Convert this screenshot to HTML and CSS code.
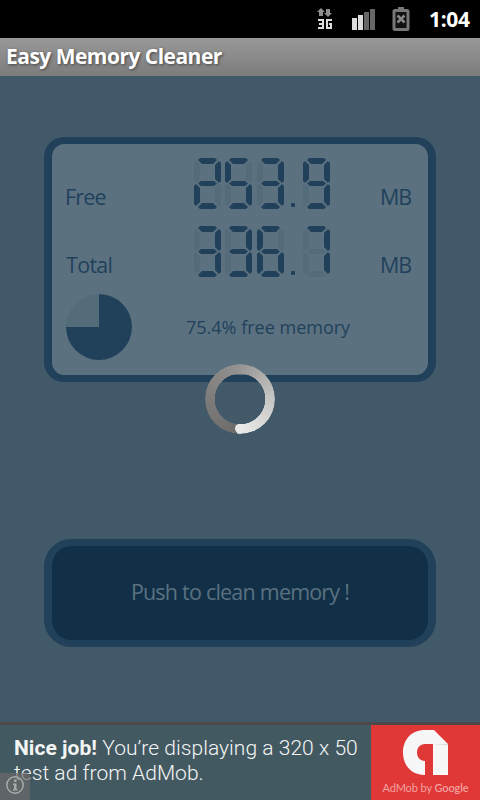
FILE: index.html
```html
<!DOCTYPE html>
<html lang="en">

<head>
    <meta charset="UTF-8">
    <meta name="viewport" content="width=device-width, initial-scale=1.0">
    <title>Easy Memory Cleaner</title>
    <link rel="stylesheet" href="styles.css">
</head>

<body>
    <div class="screen">
        <div class="status">
            <svg class="net" width="20" height="26" viewBox="0 0 20 26">
                <path fill="#8f8f8f" d="M6 2l4 4H8v4H4V6H2zM13 11l4-4h-2V3h-4v4H9z" />
                <path fill="none" stroke="#ddd" stroke-width="2" d="M3 14h5v8H3M4 18h4M17 14h-5v8h4v-4h-2" />
            </svg>
            <svg class="signal" width="24" height="22" viewBox="0 0 24 22">
                <path fill="#ddd" d="M0 10h5v12H0zM6 7h5v15H6z" />
                <path fill="#666" d="M12 4h5v18h-5zM18 1h5v21h-5z" />
            </svg>
            <svg class="battery" width="18" height="26" viewBox="0 0 18 26">
                <path fill="#777" d="M6 1h6v3H6z" />
                <rect x="2" y="4.500" width="14" height="19" rx="1" fill="#111" stroke="#777" stroke-width="3" />
                <path stroke="#888" stroke-width="2.500" d="M5.500 9.500l7 7M12.500 9.500l-7 7" />
            </svg>
            <span class="clock">1:04</span>
        </div>
        <div class="title">Easy Memory Cleaner</div>
        <div class="content">
            <div class="panel">
                <div class="row">
                    <span class="label">Free</span>
                    <div class="lcd" aria-label="253.9">
                        <div class="digit n2"><i class="a"></i><i class="b"></i><i class="c"></i><i class="d"></i><i class="e"></i><i class="f"></i><i class="g"></i></div>
                        <div class="digit n5"><i class="a"></i><i class="b"></i><i class="c"></i><i class="d"></i><i class="e"></i><i class="f"></i><i class="g"></i></div>
                        <div class="digit n3"><i class="a"></i><i class="b"></i><i class="c"></i><i class="d"></i><i class="e"></i><i class="f"></i><i class="g"></i></div>
                        <div class="dot"></div>
                        <div class="digit n9"><i class="a"></i><i class="b"></i><i class="c"></i><i class="d"></i><i class="e"></i><i class="f"></i><i class="g"></i></div>
                    </div>
                    <span class="unit">MB</span>
                </div>
                <div class="row">
                    <span class="label total">Total</span>
                    <div class="lcd" aria-label="336.7">
                        <div class="digit n3"><i class="a"></i><i class="b"></i><i class="c"></i><i class="d"></i><i class="e"></i><i class="f"></i><i class="g"></i></div>
                        <div class="digit n3"><i class="a"></i><i class="b"></i><i class="c"></i><i class="d"></i><i class="e"></i><i class="f"></i><i class="g"></i></div>
                        <div class="digit n6"><i class="a"></i><i class="b"></i><i class="c"></i><i class="d"></i><i class="e"></i><i class="f"></i><i class="g"></i></div>
                        <div class="dot"></div>
                        <div class="digit n7"><i class="a"></i><i class="b"></i><i class="c"></i><i class="d"></i><i class="e"></i><i class="f"></i><i class="g"></i></div>
                    </div>
                    <span class="unit">MB</span>
                </div>
                <div class="summary">
                    <div class="pie"></div>
                    <span class="percent">75.4% free memory</span>
                </div>
            </div>
            <div class="button">Push to clean memory !</div>
        </div>
        <div class="ad">
            <div class="ad-text">
                <div class="line1"><b>Nice job!</b> You’re displaying a 320 x 50</div>
                <div class="line2">test ad from AdMob.</div>
            </div>
            <div class="admob">
                <svg width="45" height="45" viewBox="0 0 45 45">
                    <path fill="#f7f7f7" d="M31 0H22C8 0 0 10 0 22.500S8 45 22 45V31c-5 0-8-4-8-8.500S17 14 22 14h8v31h15V14z" />
                    <path fill="#d5ddd9" d="M30 14h15v1.500z" />
                </svg>
                <div class="admob-name">AdMob by <b>Google</b></div>
            </div>
            <div class="info">
                <svg width="20" height="20" viewBox="0 0 20 20">
                    <circle cx="10" cy="10" r="8.200" fill="none" stroke="#aaa" stroke-width="1.500" />
                    <path fill="#aaa" d="M9 4.500h2.500V7H9zM8 8.500h3.500V14h1v1.500H8V14h1v-4H8z" />
                </svg>
            </div>
        </div>
        <div class="spinner"></div>
    </div>
</body>

</html>
```
FILE: styles.css
```css
* {
    margin: 0;
    padding: 0;
    box-sizing: border-box;
}

body {
    background: #425969;
    font-family: "Open Sans", "Noto Sans", sans-serif;
}

.screen {
    position: relative;
    display: flex;
    flex-direction: column;
    width: 480px;
    height: 800px;
    overflow: hidden;
}

.status {
    display: flex;
    align-items: flex-start;
    height: 38px;
    padding-left: 315px;
    background: #000;
}

.net {
    margin-top: 6px;
}

.signal {
    margin: 8px 0 0 17px;
}

.battery {
    margin: 6px 0 0 16px;
}

.clock {
    margin-left: 19px;
    color: #fff;
    font-family: "Noto Sans", sans-serif;
    font-size: 21px;
    font-weight: bold;
    line-height: 38px;
    letter-spacing: -0.3px;
}

.title {
    height: 38px;
    padding-left: 6px;
    background: linear-gradient(#989898, #7c7c7c);
    color: #fff;
    font-size: 21px;
    font-weight: bold;
    line-height: 37px;
    letter-spacing: -0.52px;
    white-space: nowrap;
    text-shadow: 1px 1px 3px #444;
}

.content {
    height: 646px;
    padding: 61px 44px 0;
}

.panel {
    height: 245px;
    padding-top: 14px;
    border: solid #21415b;
    border-width: 7px 8px;
    border-radius: 20px;
    background: #5b7180;
    color: #21415b;
    font-size: 21.5px;
}

.row {
    display: flex;
    height: 68px;
}

.label,
.unit {
    line-height: 30px;
    margin-top: 24px;
}

.label {
    width: 142px;
    padding-left: 13px;
    letter-spacing: -0.8px;
}

.total {
    padding-left: 14px;
    letter-spacing: -0.7px;
}

.unit {
    margin-left: 50px;
    letter-spacing: -1.2px;
}

.lcd {
    display: flex;
    gap: 4px;
    width: 136px;
}

.digit {
    display: grid;
    flex: none;
    width: 27px;
    height: 51px;
}

.digit i {
    grid-area: 1 / 1;
    background: #546b7a;
}

.a,
.d,
.g {
    width: 19px;
    height: 6px;
    justify-self: center;
}

.a {
    clip-path: polygon(2px 0, 17px 0, 100% 2px, 15px 100%, 4px 100%, 0 2px);
}

.d {
    align-self: end;
    clip-path: polygon(4px 0, 15px 0, 100% 4px, 17px 100%, 2px 100%, 0 4px);
}

.g {
    height: 5px;
    align-self: center;
    clip-path: polygon(3px 0, 16px 0, 100% 50%, 16px 100%, 3px 100%, 0 50%);
}

.b,
.c,
.e,
.f {
    width: 6px;
    height: 22px;
}

.b,
.f {
    margin-top: 3px;
}

.c,
.e {
    align-self: end;
    margin-bottom: 3px;
}

.b,
.c {
    justify-self: end;
    clip-path: polygon(0 4px, 4px 0, 100% 2px, 100% 20px, 4px 100%, 0 18px);
}

.e,
.f {
    clip-path: polygon(0 2px, 2px 0, 100% 4px, 100% 18px, 2px 100%, 0 20px);
}

.n2 :not(.c):not(.f),
.n3 :not(.e):not(.f),
.n5 :not(.b):not(.e),
.n6 :not(.b),
.n7 .a,
.n7 .b,
.n7 .c,
.n9 :not(.e) {
    background: #21415b;
}

.digit:nth-child(3) {
    margin-left: 1px;
}

.dot {
    flex: none;
    width: 4px;
    height: 4px;
    align-self: flex-start;
    margin: 45px 4px 0 3px;
    background: #21415b;
    border-radius: 1px;
}

.summary {
    display: flex;
    align-items: center;
    height: 66px;
    padding-left: 14px;
}

.pie {
    width: 66px;
    height: 66px;
    border-radius: 50%;
    background: conic-gradient(#21415b 75%, #546b7a 0);
}

.percent {
    margin-left: 54px;
    font-size: 18px;
    white-space: nowrap;
}

.button {
    height: 108px;
    margin-top: 157px;
    border: solid #21415b;
    border-width: 7px 8px;
    border-radius: 27px;
    background: #113048;
    color: #5b7180;
    font-size: 21.5px;
    line-height: 92px;
    text-align: center;
    letter-spacing: -0.82px;
    word-spacing: 0.2px;
    white-space: nowrap;
}

.ad {
    position: relative;
    display: flex;
    height: 78px;
    border-top: 3px solid #4c4949;
    background: #435961;
    color: #f3f5f5;
    font-family: Roboto, sans-serif;
}

.ad-text {
    width: 371px;
    padding: 11px 0 0 14px;
    font-size: 21px;
    font-weight: 300;
    line-height: 25px;
    letter-spacing: 0.04px;
    white-space: nowrap;
}

.ad-text b {
    font-weight: 700;
}

.admob {
    display: flex;
    flex-direction: column;
    align-items: center;
    width: 109px;
    padding-top: 5px;
    background: #df3837;
}

.admob-name {
    margin-top: 6px;
    color: #f3a19f;
    font-family: Lato, sans-serif;
    font-size: 11px;
    line-height: 14px;
    letter-spacing: -0.1px;
    white-space: nowrap;
}

.admob-name b {
    font-weight: 600;
}

.info {
    position: absolute;
    left: 0;
    bottom: 0;
    width: 30px;
    height: 27px;
    padding: 2px 5px;
    border-top-right-radius: 3px;
    background: rgba(105, 105, 105, 0.7);
}

.spinner {
    position: absolute;
    left: 205px;
    top: 364px;
    width: 70px;
    height: 70px;
    border-radius: 50%;
    background: conic-gradient(from 185deg, #6e6c6b, #7e7c7b 85deg, #949291 170deg, #c4c4c2 260deg, #e8e8e6 350deg);
    -webkit-mask: radial-gradient(circle, transparent 25px, #000 25.5px);
    mask: radial-gradient(circle, transparent 25px, #000 25.5px);
}

/* rounded head of the ring */
.spinner::after {
    content: "";
    position: absolute;
    left: 30px;
    top: 60px;
    width: 9px;
    height: 9px;
    border-radius: 50%;
    background: #e8e8e6;
}
```
